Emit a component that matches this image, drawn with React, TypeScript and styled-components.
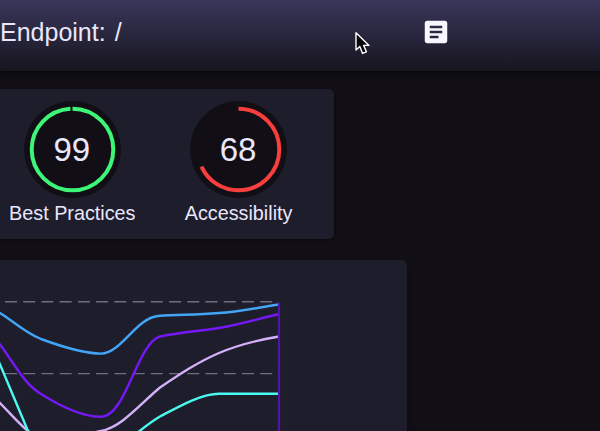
import React from "react";
import styled, { createGlobalStyle } from "styled-components";
import { MdArticle } from "react-icons/md";

const GlobalStyle = createGlobalStyle`
  * { box-sizing: border-box; }
  body {
    margin: 0;
    background: #110f15;
    overflow: hidden;
    font-family: "Liberation Sans", Arial, sans-serif;
    color: #eae6fb;
  }
`;

const Page = styled.div`
  position: relative;
  display: flex;
  flex-direction: column;
  width: 600px;
  height: 431px;
  overflow: hidden;
`;

const Header = styled.header`
  flex: none;
  display: flex;
  align-items: center;
  justify-content: space-between;
  height: 71px;
  padding: 0 149.5px 7px 0;
  background: linear-gradient(#3a3658 0, #343151 10px, #2b2942 30px, #201e2e 52px, #17151f 71px);
  box-shadow: 0 2px 6px #08080a;
`;

const Title = styled.h1`
  margin: 0;
  font-size: 25px;
  font-weight: 400;
  line-height: 30px;
  word-spacing: 2.2px;
  white-space: nowrap;
`;

const ReportButton = styled.button`
  display: flex;
  padding: 0;
  border: 0;
  background: none;
  color: #f8f7ff;
`;

const Content = styled.main`
  display: flex;
  flex-direction: column;
  align-items: flex-start;
  gap: 21px;
  padding-top: 18px;
`;

const Card = styled.section<{ $width: number; $height: number }>`
  flex: none;
  width: ${(p) => p.$width}px;
  height: ${(p) => p.$height}px;
  border-radius: 0 5px 5px 0;
  background: #1e1d2c;
  box-shadow: 0 1px 3px #09090c;
  overflow: hidden;
`;

const ScoreCard = styled(Card)`
  display: grid;
  grid-template-columns: 144.6px 188px;
  padding-top: 12px;
`;

const Score = styled.div`
  display: flex;
  flex-direction: column;
  align-items: center;
`;

const Gauge = styled.div`
  display: grid;
  width: 97px;
  height: 97px;
  > * { grid-area: 1 / 1; }
`;

const ScoreValue = styled.span`
  place-self: center;
  padding-right: 1px;
  font-size: 33px;
  line-height: 38px;
`;

const ScoreLabel = styled.span`
  margin-top: 3px;
  font-size: 19.8px;
  line-height: 24px;
  white-space: nowrap;
`;

const Pointer = styled.svg`
  position: absolute;
  left: 354px;
  top: 31px;
`;

const RING = 40.8;
const LENGTH = 2 * Math.PI * RING;

function ScoreGauge({ value, label, color }: { value: number; label: string; color: string }) {
  return (
    <Score>
      <Gauge>
        <svg width="97" height="97" viewBox="0 0 97 97">
          <circle cx="48.5" cy="48.5" r="48.4" fill="#110f15" />
          <circle
            cx="48.5"
            cy="48.5"
            r={RING}
            fill="none"
            stroke={color}
            strokeWidth="4"
            strokeDasharray={`${(LENGTH * value) / 100} ${LENGTH}`}
            transform="rotate(-90 48.5 48.5)"
          />
        </svg>
        <ScoreValue>{value}</ScoreValue>
      </Gauge>
      <ScoreLabel>{label}</ScoreLabel>
    </Score>
  );
}

const series = [
  {
    color: "#d4b0f8",
    path: "M-15,388 L0,403 C10,413 18,423 28,431 C50,445 80,435 101,431 C122,427 140,404 160,387.5 C180,374 198,362 219,353 C238,345 258,340 279,336.5",
  },
  {
    color: "#4afaf0",
    path: "M-13,334 L0,364.5 L28,431 L42,464 M120,447 C134,436 144,426 160,416.5 C178,407 201,393.7 219,393.7 H279",
  },
  {
    color: "#7418f5",
    path: "M-14,326 L0,344.5 C14,363 24,384 41,394 C60,406 82,416.8 101,416.8 C126,416.8 137,343 160,336.5 C183,332 195,331.5 219,328 C238,325 258,319 279,314",
  },
  {
    color: "#42a5f5",
    path: "M-14,304 L0,313 C12,320 24,332 41,339 C60,346 84,353.6 101,353.6 C121,353.6 136,318 158,316 C182,314.5 195,315 219,313 C240,311.5 258,307.5 279,304.5",
  },
];

function Chart() {
  return (
    <svg width="407" height="171" viewBox="0 260 407 171">
      <g stroke="#716d82" strokeWidth="1.4" strokeDasharray="12 6.23">
        <path d="M5 301.8H272.5" />
        <path d="M5 373.6H272.5" />
      </g>
      <g fill="none" strokeWidth="2.4">
        {series.map((s) => (
          <path key={s.color} d={s.path} stroke={s.color} />
        ))}
      </g>
      <path d="M279 302V431" stroke="#5511ab" strokeWidth="2.2" />
    </svg>
  );
}

export default function App() {
  return (
    <Page>
      <GlobalStyle />
      <Header>
        <Title>Endpoint: /</Title>
        <ReportButton aria-label="Report">
          <MdArticle size={30} />
        </ReportButton>
      </Header>
      <Content>
        <ScoreCard $width={334} $height={150}>
          <ScoreGauge value={99} label="Best Practices" color="#3df577" />
          <ScoreGauge value={68} label="Accessibility" color="#f93e3e" />
        </ScoreCard>
        <Card $width={407} $height={190}>
          <Chart />
        </Card>
      </Content>
      <Pointer width="18" height="26" viewBox="0 0 18 26">
        <path
          d="M2 1.8V19L5.8 15.6L8.6 22.4L12.4 20.8L9.6 14.4H15Z"
          fill="#08080b"
          stroke="#fff"
          strokeWidth="1.4"
          strokeLinejoin="round"
        />
      </Pointer>
    </Page>
  );
}
